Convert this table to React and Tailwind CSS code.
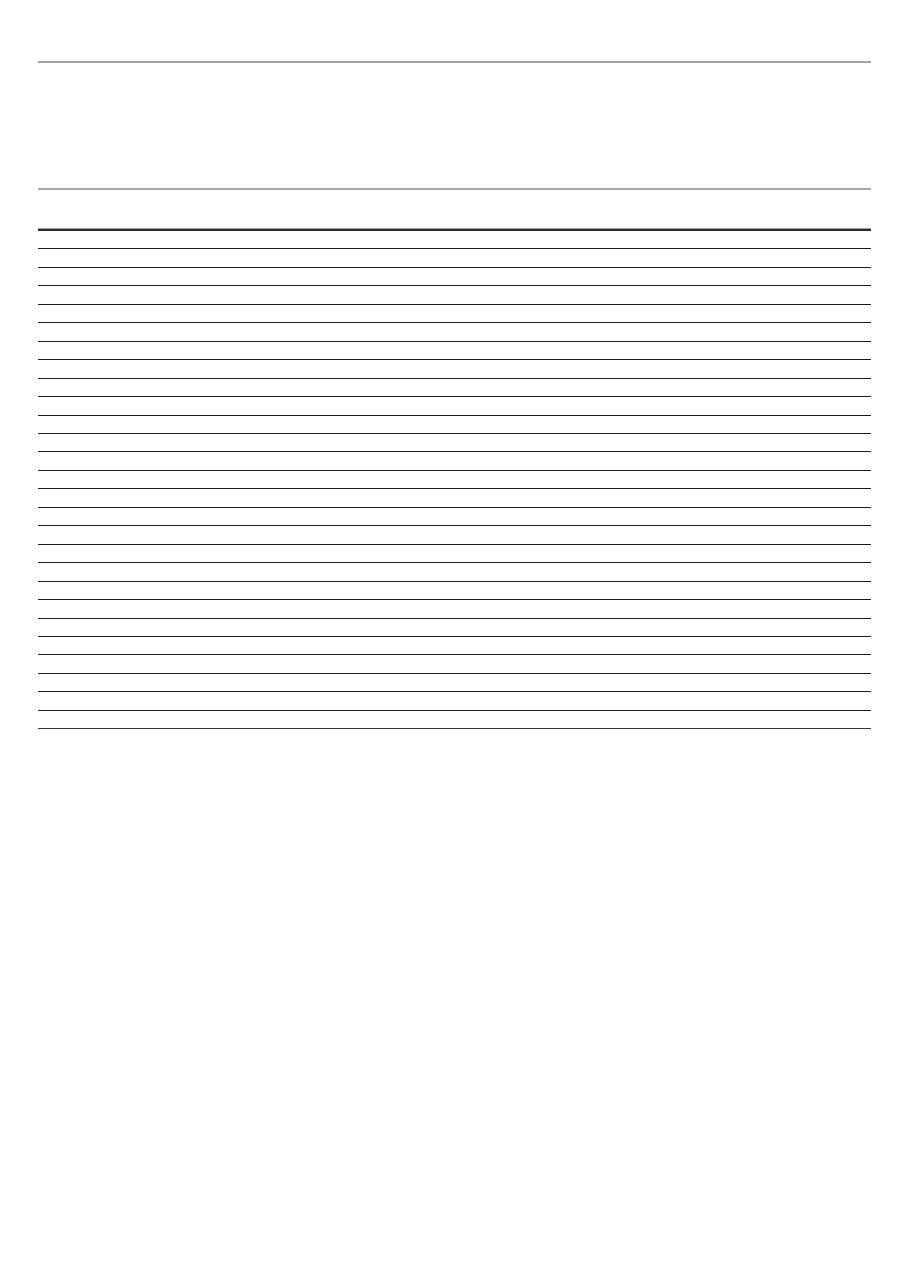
// Blank ledger sheet: header band and ruled rows
const rows = Array.from({ length: 27 }, (_, i) => i);

export default function App() {
  return (
    <div className="min-h-[1286px] w-[909px] bg-white font-['Liberation_Sans',sans-serif]">
      <div className="mx-[38px] pt-[61px]">
        <div className="h-[129px] border-t-2 border-b-2 border-t-[#a3a3a3] border-b-[#a8a8a8]" />
        <div className="h-[41px] border-b-2 border-b-[#2a2a2a] shadow-[0_-1px_0_0_#a0a0a0_inset]" />
        <div className="flex flex-col">
          {rows.map((r) => (
            <div
              key={r}
              className={`h-[18.46px] border-b ${r === 26 ? "border-b-[#3a3a3a]" : "border-b-[#1c1c1c]"}`}
            />
          ))}
        </div>
      </div>
    </div>
  );
}
